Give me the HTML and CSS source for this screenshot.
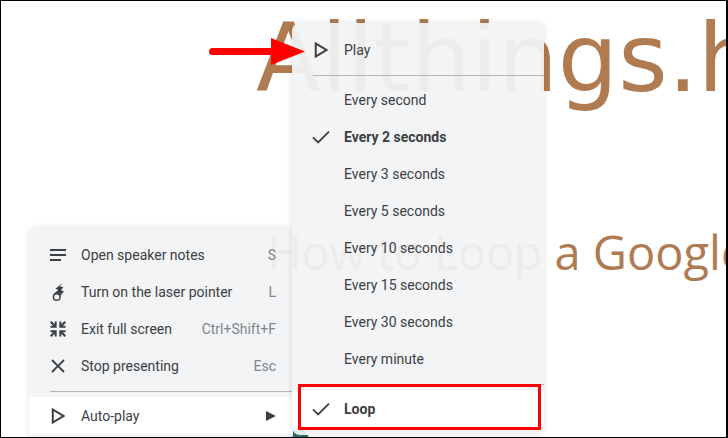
FILE: index.html
```html
<!DOCTYPE html>
<html lang="en">

<head>
    <meta charset="UTF-8">
    <title>Loop a Google Slides presentation</title>
    <link rel="stylesheet" href="styles.css">
</head>

<body>
    <div class="frame">
        <div class="slide-title">Allthings.how</div>
        <div class="slide-subtitle"><span class="tight">How to Loop</span> a Google Slides</div>
        <div class="slide-shape"></div>

        <div class="menu menu-main">
            <div class="row">
                <svg class="icon" viewBox="0 0 24 24"><path d="M2.400 4.800h19.200v2.400H2.400zM2.400 10.800h19.200v2.400H2.400zM2.400 16.800h13.200v2.400H2.400z" /></svg>
                <span class="label">Open speaker notes</span>
                <span class="key">S</span>
            </div>
            <div class="row">
                <svg class="icon" viewBox="0 0 24 24"><path d="M17.500 1 9 8l3.500 1.500-5 4 .5 1.500c2-2 5-2 6.500 0l.5 1.500 4-5.500-3.500-1 3-4-4.500-.5z" /><circle class="ring" cx="10.500" cy="18" r="4" /></svg>
                <span class="label">Turn on the laser pointer</span>
                <span class="key">L</span>
            </div>
            <div class="row">
                <svg class="icon" viewBox="0 0 24 24"><path d="M2.400 4.200 4.200 2.400 8 6.200V3h2.400v7.400H3V8h3.200zM21.600 4.200 19.800 2.400 16 6.200V3h-2.400v7.400H21V8h-3.200zM2.400 19.800 4.200 21.600 8 17.800V21h2.400v-7.400H3V16h3.200zM21.600 19.800 19.800 21.600 16 17.800V21h-2.400v-7.400H21V16h-3.200z" /></svg>
                <span class="label">Exit full screen</span>
                <span class="key">Ctrl+Shift+F</span>
            </div>
            <div class="row">
                <svg class="icon" viewBox="0 0 24 24"><path d="M20 5.600 18.400 4 12 10.400 5.600 4 4 5.600 10.400 12 4 18.400 5.600 20 12 13.600 18.400 20 20 18.400 13.600 12z" /></svg>
                <span class="label">Stop presenting</span>
                <span class="key">Esc</span>
            </div>
            <div class="divider"></div>
            <div class="row active">
                <svg class="icon" viewBox="0 0 24 24"><path d="M4.500 2v20L21 12zM6.900 6.400 16.400 12l-9.500 5.600z" /></svg>
                <span class="label">Auto-play</span>
                <span class="submenu-arrow"></span>
            </div>
        </div>

        <div class="menu menu-autoplay">
            <div class="row">
                <svg class="icon" viewBox="0 0 24 24"><path d="M4.500 2v20L21 12zM6.900 6.400 16.400 12l-9.500 5.600z" /></svg>
                <span class="label">Play</span>
            </div>
            <div class="divider"></div>
            <div class="row"><span class="icon"></span><span class="label">Every second</span></div>
            <div class="row">
                <svg class="icon" viewBox="0 0 24 24"><path class="check" d="M2.400 12.500 8.500 18.500 21.600 5.500" /></svg>
                <span class="label bold">Every 2 seconds</span>
            </div>
            <div class="row"><span class="icon"></span><span class="label">Every 3 seconds</span></div>
            <div class="row"><span class="icon"></span><span class="label">Every 5 seconds</span></div>
            <div class="row"><span class="icon"></span><span class="label">Every 10 seconds</span></div>
            <div class="row"><span class="icon"></span><span class="label">Every 15 seconds</span></div>
            <div class="row"><span class="icon"></span><span class="label">Every 30 seconds</span></div>
            <div class="row"><span class="icon"></span><span class="label">Every minute</span></div>
            <div class="divider"></div>
            <div class="row active">
                <svg class="icon" viewBox="0 0 24 24"><path class="check" d="M2.400 12.500 8.500 18.500 21.600 5.500" /></svg>
                <span class="label bold">Loop</span>
            </div>
        </div>

        <svg class="red-arrow" viewBox="0 0 98 30"><path d="M3.500 10H62V0l34 13.500L62 27V17H3.500a3.500 3.500 0 0 1 0-7z" /></svg>
        <div class="red-box"></div>
    </div>
</body>

</html>
```

FILE: styles.css
```css
* {
    margin: 0;
    padding: 0;
    box-sizing: border-box;
}

body {
    background: #fff;
    overflow: hidden;
}

.frame {
    position: relative;
    width: 728px;
    height: 438px;
    overflow: hidden;
    border: 1px solid #000;
    border-right-width: 2px;
    font-family: Roboto, sans-serif;
}

.slide-title {
    position: absolute;
    left: 255px;
    top: -2px;
    font-family: "DejaVu Sans", sans-serif;
    font-size: 95px;
    line-height: 118px;
    color: #b07b50;
    white-space: nowrap;
}

.slide-subtitle {
    position: absolute;
    left: 266px;
    top: 218px;
    font-family: "Open Sans", sans-serif;
    font-size: 47px;
    line-height: 66px;
    color: #b07b50;
    white-space: nowrap;
}

.tight {
    letter-spacing: -0.3px;
}

.slide-shape {
    position: absolute;
    left: 286px;
    top: 428px;
    width: 22px;
    height: 22px;
    border-radius: 50%;
    background: #2f6f73;
}

.menu {
    position: absolute;
    background: rgba(241, 243, 244, 0.94);
    border-radius: 8px;
    box-shadow: 0 0 5px 2px rgba(0, 0, 0, 0.07);
    padding: 8px 0;
    color: #3c4043;
    font-size: 14px;
}

.menu-main {
    left: 28px;
    top: 227px;
    width: 264px;
}

.menu-autoplay {
    left: 291px;
    top: 22px;
    width: 252px;
}

.row {
    display: flex;
    align-items: center;
    height: 37px;
    padding: 0 17px 0 19px;
}

.row.active {
    background: #fff;
}

.icon {
    flex: none;
    width: 20px;
    height: 20px;
    margin-right: 13px;
    fill: #3c4043;
}

.ring {
    fill: none;
    stroke: #3c4043;
    stroke-width: 1.800;
}

.check {
    fill: none;
    stroke: #3c4043;
    stroke-width: 2.200;
}

.label {
    flex: 1;
    white-space: nowrap;
}

.bold {
    font-weight: 700;
}

.key {
    color: #80868b;
    white-space: nowrap;
}

.submenu-arrow {
    width: 0;
    height: 0;
    border-left: 10px solid #3c4043;
    border-top: 5px solid transparent;
    border-bottom: 5px solid transparent;
}

.divider {
    height: 1px;
    margin: 7px 0 5px 21px;
    background: #b4b6b8;
}

.red-arrow {
    position: absolute;
    left: 208px;
    top: 37px;
    width: 98px;
    height: 30px;
    fill: #ff0000;
}

.red-box {
    position: absolute;
    left: 297px;
    top: 383px;
    width: 243px;
    height: 46px;
    border: 3px solid #ff0000;
}
```
